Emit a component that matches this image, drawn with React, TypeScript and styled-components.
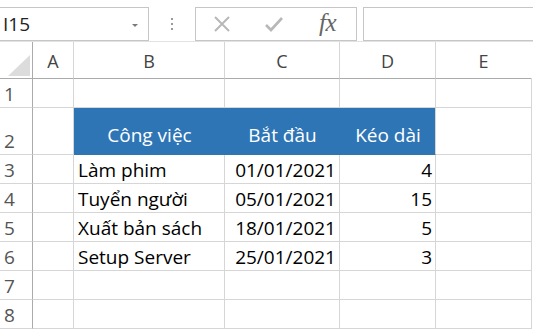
import React from 'react';
import styled, { createGlobalStyle } from 'styled-components';

const GlobalStyle = createGlobalStyle`
  html, body {
    margin: 0;
    padding: 0;
    background: #ffffff;
  }
  * {
    box-sizing: border-box;
  }
`;

const Window = styled.div`
  width: 533px;
  height: 330px;
  overflow: hidden;
  background: #ffffff;
  font-family: 'Open Sans', 'Noto Sans', sans-serif;
`;

const FormulaBar = styled.div`
  height: 41px;
  display: flex;
  align-items: flex-start;
  padding-top: 7px;
`;

const NameBox = styled.div`
  width: 149px;
  height: 34px;
  border: 1px solid #c6c6c6;
  border-left: none;
  display: flex;
  align-items: center;
  justify-content: space-between;
  padding: 0 10px 0 3px;
  font-size: 19px;
  color: #222;
`;

const DropArrow = styled.span`
  width: 0;
  height: 0;
  border-left: 3px solid transparent;
  border-right: 3px solid transparent;
  border-top: 3px solid #7a7a7a;
  margin-top: 2px;
`;

const Grip = styled.div`
  width: 46px;
  height: 34px;
  display: flex;
  flex-direction: column;
  align-items: center;
  justify-content: center;
  gap: 3px;

  span {
    width: 2px;
    height: 2px;
    background: #9a9a9a;
  }
`;

const FuncBox = styled.div`
  width: 162px;
  height: 34px;
  border: 1px solid #c6c6c6;
  display: flex;
  align-items: center;
  padding-left: 17px;
`;

const FuncIcon = styled.span`
  width: 52px;
  display: flex;
  align-items: center;
`;

const Fx = styled.span`
  font-family: 'Liberation Serif', serif;
  font-style: italic;
  font-size: 25px;
  color: #666;
  margin-left: 2px;
  margin-top: -3px;
  letter-spacing: -0.5px;
`;

const InputBox = styled.div`
  flex: 1;
  height: 34px;
  margin-left: 6px;
  border: 1px solid #c6c6c6;
  border-right: none;
`;

const Sheet = styled.div`
  display: grid;
  grid-template-columns: 33px 41px 151px 115px 96px 96px;
  grid-template-rows: 37px 29px 47px repeat(6, 29px);
  border-top: 1px solid #e2e2e2;
  font-size: 19px;
  color: #000;
`;

const Corner = styled.div`
  border-right: 1px solid #ababab;
  border-bottom: 1px solid #ababab;
  position: relative;

  &::after {
    content: '';
    position: absolute;
    left: 8px;
    top: 13px;
    width: 0;
    height: 0;
    border-left: 22px solid transparent;
    border-bottom: 21px solid #dcdcdc;
  }
`;

const ColHead = styled.div<{ $last?: boolean }>`
  border-right: 1px solid ${(p) => (p.$last ? 'transparent' : '#d6d6d6')};
  border-bottom: 1px solid #ababab;
  display: flex;
  align-items: center;
  justify-content: center;
  color: #444;
  font-size: 18px;
  padding-top: 1px;
`;

const RowHead = styled.div`
  border-right: 1px solid #ababab;
  border-bottom: 1px solid #d6d6d6;
  display: flex;
  align-items: flex-end;
  padding: 0 0 0 4px;
  color: #555;
`;

const Cell = styled.div<{ $align?: 'left' | 'right' | 'center'; $head?: boolean; $edge?: boolean }>`
  border-right: 1px solid ${(p) => (p.$head && !p.$edge ? '#2e75b6' : '#d6d6d6')};
  border-bottom: 1px solid ${(p) => (p.$head ? '#2e75b6' : '#d6d6d6')};
  background: ${(p) => (p.$head ? '#2e75b6' : 'transparent')};
  color: ${(p) => (p.$head ? '#ffffff' : '#000000')};
  display: flex;
  align-items: flex-end;
  justify-content: ${(p) =>
    p.$align === 'right' ? 'flex-end' : p.$align === 'center' ? 'center' : 'flex-start'};
  padding: 0 3px ${(p) => (p.$head ? '6px' : '0')} 4px;
  white-space: nowrap;
  overflow: hidden;
`;

const rows = [
  { task: 'Làm phim', start: '01/01/2021', len: '4' },
  { task: 'Tuyển người', start: '05/01/2021', len: '15' },
  { task: 'Xuất bản sách', start: '18/01/2021', len: '5' },
  { task: 'Setup Server', start: '25/01/2021', len: '3' },
];

const CrossIcon = () => (
  <svg width="18" height="18" viewBox="0 0 18 18">
    <path d="M2 2 L16 16 M16 2 L2 16" stroke="#b8b8b8" strokeWidth="2" fill="none" />
  </svg>
);

const CheckIcon = () => (
  <svg width="18" height="16" viewBox="0 0 18 16">
    <path d="M1 9 L6 14 L17 2" stroke="#b8b8b8" strokeWidth="2.6" fill="none" />
  </svg>
);

export default function App() {
  return (
    <Window>
      <GlobalStyle />
      <FormulaBar>
        <NameBox>
          I15
          <DropArrow />
        </NameBox>
        <Grip>
          <span />
          <span />
          <span />
        </Grip>
        <FuncBox>
          <FuncIcon>
            <CrossIcon />
          </FuncIcon>
          <FuncIcon>
            <CheckIcon />
          </FuncIcon>
          <Fx>fx</Fx>
        </FuncBox>
        <InputBox />
      </FormulaBar>
      <Sheet>
        <Corner />
        {['A', 'B', 'C', 'D', 'E'].map((c) => (
          <ColHead key={c} $last={c === 'E'}>
            {c}
          </ColHead>
        ))}

        <RowHead>1</RowHead>
        <Cell />
        <Cell />
        <Cell />
        <Cell />
        <Cell />

        <RowHead>2</RowHead>
        <Cell />
        <Cell $head $align="center">Công việc</Cell>
        <Cell $head $align="center">Bắt đầu</Cell>
        <Cell $head $edge $align="center">Kéo dài</Cell>
        <Cell />

        {rows.map((r, i) => (
          <React.Fragment key={r.task}>
            <RowHead>{i + 3}</RowHead>
            <Cell />
            <Cell>{r.task}</Cell>
            <Cell $align="right">{r.start}</Cell>
            <Cell $align="right">{r.len}</Cell>
            <Cell />
          </React.Fragment>
        ))}

        {[7, 8].map((n) => (
          <React.Fragment key={n}>
            <RowHead>{n}</RowHead>
            <Cell />
            <Cell />
            <Cell />
            <Cell />
            <Cell />
          </React.Fragment>
        ))}
      </Sheet>
    </Window>
  );
}
